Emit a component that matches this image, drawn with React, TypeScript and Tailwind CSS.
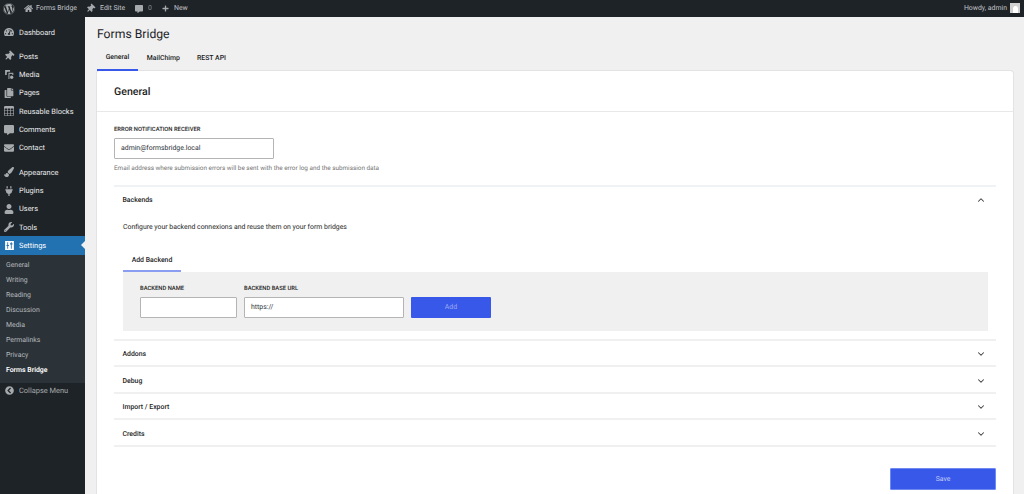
import React from "react";
import { FaWordpress, FaHome, FaThumbtack, FaTachometerAlt, FaPaintBrush, FaPlug, FaUser, FaWrench, FaCopy, FaPlus, FaCommentAlt, FaEnvelope, FaChevronCircleLeft } from "react-icons/fa";
import { BsTable } from "react-icons/bs";
import { ChevronDown, ChevronUp } from "lucide-react";

const MediaIcon = () => (
  <svg viewBox="0 0 20 20" className="w-[11px] h-[11px]" fill="currentColor">
    <path d="M2 2h9v3H7a2 2 0 0 0-2 2v4H2z" />
    <path d="M8 7h9v4h-2V9h-5v9H8z" opacity="0.9" />
    <circle cx="14" cy="15" r="3" />
  </svg>
);

const SettingsIcon = () => (
  <svg viewBox="0 0 20 20" className="w-[11px] h-[11px]" fill="currentColor">
    <path fillRule="evenodd" d="M2 2h16v16H2zM6 4v5H4.500v2H6v5h1.500v-5H9V9H7.500V4zM12.500 4v2H11v2h1.500v8H14V8h1.500V6H14V4z" />
  </svg>
);

const Item = ({ icon, label }: { icon: React.ReactNode; label: string }) => (
  <div className="h-[18.3px] flex items-center text-[#eaeaeb] text-[7.44px]">
    <div className="w-[19px] pl-[4px] flex items-center text-[#a7aaad] text-[10px]">{icon}</div>
    <span>{label}</span>
  </div>
);

const Sub = ({ label, active }: { label: string; active?: boolean }) => (
  <div className={`h-[15px] flex items-center pl-[6px] text-[6.9px] ${active ? "text-white font-semibold" : "text-[#b4b9be]"}`}>{label}</div>
);

const Section = ({ label }: { label: string }) => (
  <div className="h-[26.6px] flex items-center justify-between pt-[3px] pl-[8.5px] pr-[10px] border-b-2 border-[#f0f0f0]">
    <span className="text-[6.9px] font-medium text-[#1e1e1e]">{label}</span>
    <ChevronDown className="w-[10px] h-[10px] text-[#3c3c3c]" strokeWidth={2.5} />
  </div>
);

const Label = ({ children }: { children: React.ReactNode }) => (
  <div className="text-[5.83px] font-medium text-[#1e1e1e] uppercase leading-[7px] mb-[4px]">{children}</div>
);

export default function App() {
  return (
    <div className="w-[1024px] h-[494px] overflow-hidden flex flex-col bg-[#f0f0f1] font-['Roboto',sans-serif] [text-rendering:geometricPrecision]">
      <header className="h-[17px] shrink-0 bg-[#1d2327] flex items-center justify-between text-[#c3c4c7] text-[6.9px]">
        <div className="flex items-center">
          <FaWordpress className="ml-[3px] w-[12px] h-[12px] text-[#a7aaad]" />
          <FaHome className="ml-[9px] w-[9px] h-[9px] text-[#a7aaad]" />
          <span className="ml-[3px]">Forms Bridge</span>
          <FaThumbtack className="ml-[9px] w-[9px] h-[9px] text-[#a7aaad] rotate-45" />
          <span className="ml-[5px]">Edit Site</span>
          <FaCommentAlt className="ml-[10px] w-[8px] h-[8px] text-[#a7aaad]" />
          <span className="ml-[5px] text-[#8c8f94]">0</span>
          <FaPlus className="ml-[10px] w-[7px] h-[7px] text-[#a7aaad]" />
          <span className="ml-[5px]">New</span>
        </div>
        <div className="flex items-center pr-[4px]">
          <span>Howdy, admin</span>
          <div className="ml-[3px] w-[10px] h-[10px] bg-[#d0d0d0] flex items-end justify-center overflow-hidden">
            <div className="w-[5px] h-[7px] bg-white rounded-t-full" />
          </div>
        </div>
      </header>
      <div className="flex flex-1 min-h-0">
        <aside className="w-[85px] shrink-0 bg-[#1d2327] flex flex-col pt-[6px]">
          <Item icon={<FaTachometerAlt />} label="Dashboard" />
          <div className="h-[6px]" />
          <Item icon={<FaThumbtack className="rotate-45" />} label="Posts" />
          <Item icon={<MediaIcon />} label="Media" />
          <Item icon={<FaCopy />} label="Pages" />
          <Item icon={<BsTable />} label="Reusable Blocks" />
          <Item icon={<FaCommentAlt />} label="Comments" />
          <Item icon={<FaEnvelope />} label="Contact" />
          <div className="h-[6px]" />
          <Item icon={<FaPaintBrush />} label="Appearance" />
          <Item icon={<FaPlug />} label="Plugins" />
          <Item icon={<FaUser />} label="Users" />
          <Item icon={<FaWrench />} label="Tools" />
          <div className="relative h-[18.5px] bg-[#2271b1] flex items-center text-white text-[7.44px]">
            <div className="w-[19px] pl-[4px] flex items-center"><SettingsIcon /></div>
            <span>Settings</span>
            <div className="absolute right-0 top-[5px] w-0 h-0 border-y-[4px] border-y-transparent border-r-[4px] border-r-[#f0f0f1]" />
          </div>
          <div className="bg-[#2c3338] pt-[3px] pb-[5px]">
            <Sub label="General" />
            <Sub label="Writing" />
            <Sub label="Reading" />
            <Sub label="Discussion" />
            <Sub label="Media" />
            <Sub label="Permalinks" />
            <Sub label="Privacy" />
            <Sub label="Forms Bridge" active />
          </div>
          <div className="h-[15px] flex items-center text-[#a7aaad] text-[7.44px]">
            <div className="w-[19px] pl-[5px] flex items-center text-[9px]"><FaChevronCircleLeft /></div>
            <span>Collapse Menu</span>
          </div>
        </aside>
        <main className="flex-1 min-w-0 pl-[12px] pr-[11px]">
          <h1 className="pt-[9px] text-[12.2px] leading-[17px] text-[#1d2327]">Forms Bridge</h1>
          <nav className="flex mt-[6px] h-[22px]">
            <div className="w-[41px] pb-[3px] flex items-center justify-center text-[6.9px] font-medium text-[#1e1e1e] border-b-2 border-[#3858e9]">General</div>
            <div className="ml-[8.700px] pb-[3px] flex items-center text-[6.9px] font-medium text-[#1e1e1e]">MailChimp</div>
            <div className="ml-[17px] pb-[3px] flex items-center text-[6.9px] font-medium text-[#1e1e1e]">REST API</div>
          </nav>
          <section className="bg-white rounded-t-[3px] shadow-[0_0_0_1px_rgba(0,0,0,0.05)] h-[500px]">
            <div className="h-[41px] pt-[1px] flex items-center pl-[17px] border-b border-[#e8e8e8] text-[10.6px] font-medium text-[#1e1e1e]">General</div>
            <div className="pl-[17px] pr-[17px] pt-[15px]">
              <Label>Error notification receiver</Label>
              <div className="w-[160px] h-[21px] mt-[-0.5px] border border-[#b4b4b4] rounded-[1px] flex items-center pl-[6px] text-[6.9px] text-[#2c3338]">admin@formsbridge.local</div>
              <p className="mt-[5px] text-[6.37px] leading-[8px] text-[#757575]">Email address where submission errors will be sent with the error log and the submission data</p>
              <div className="mt-[13px] border-t-2 border-[#f0f3f6]" />
              <div>
                <div className="h-[26px] pt-[1px] flex items-center justify-between pl-[8.5px] pr-[10px]">
                  <span className="text-[6.9px] font-medium text-[#1e1e1e]">Backends</span>
                  <ChevronUp className="w-[10px] h-[10px] text-[#3c3c3c]" strokeWidth={2.5} />
                </div>
                <p className="pl-[9px] mt-[10px] text-[6.9px] leading-[9px] text-[#1e1e1e]">Configure your backend connexions and reuse them on your form bridges</p>
                <div className="ml-[9px] mt-[16px] w-[58px] h-[24px] pt-[3px] flex items-center justify-center text-[6.9px] font-medium text-[#1e1e1e] border-b-2 border-[#8b9df0]">Add Backend</div>
                <div className="ml-[9px] mr-[8px] h-[59px] bg-[#f0f0f0] pl-[17px] pt-[14px] flex gap-[7px]">
                  <div className="w-[97px]">
                    <Label>Backend name</Label>
                    <div className="h-[21px] bg-white border border-[#b4b4b4] rounded-[1px]" />
                  </div>
                  <div className="w-[160px]">
                    <Label>Backend base URL</Label>
                    <div className="h-[21px] bg-white border border-[#b4b4b4] rounded-[1px] flex items-center pl-[6px] text-[6.9px] text-[#2c3338]">https://</div>
                  </div>
                  <div className="mt-[11px] w-[80px] h-[21px] bg-[#3858e9] rounded-[1px] flex items-center justify-center text-[6.9px] text-[#9aaaf2]">Add</div>
                </div>
                <div className="h-[10px] border-b-2 border-[#f0f0f0]" />
              </div>
              <Section label="Addons" />
              <Section label="Debug" />
              <Section label="Import / Export" />
              <Section label="Credits" />
              <div className="flex justify-end mt-[21px]">
                <div className="w-[106px] h-[22px] bg-[#3858e9] border border-[#6f89f2] rounded-[1px] flex items-center justify-center text-[6.9px] text-[#c3cdf8]">Save</div>
              </div>
            </div>
          </section>
        </main>
      </div>
    </div>
  );
}
